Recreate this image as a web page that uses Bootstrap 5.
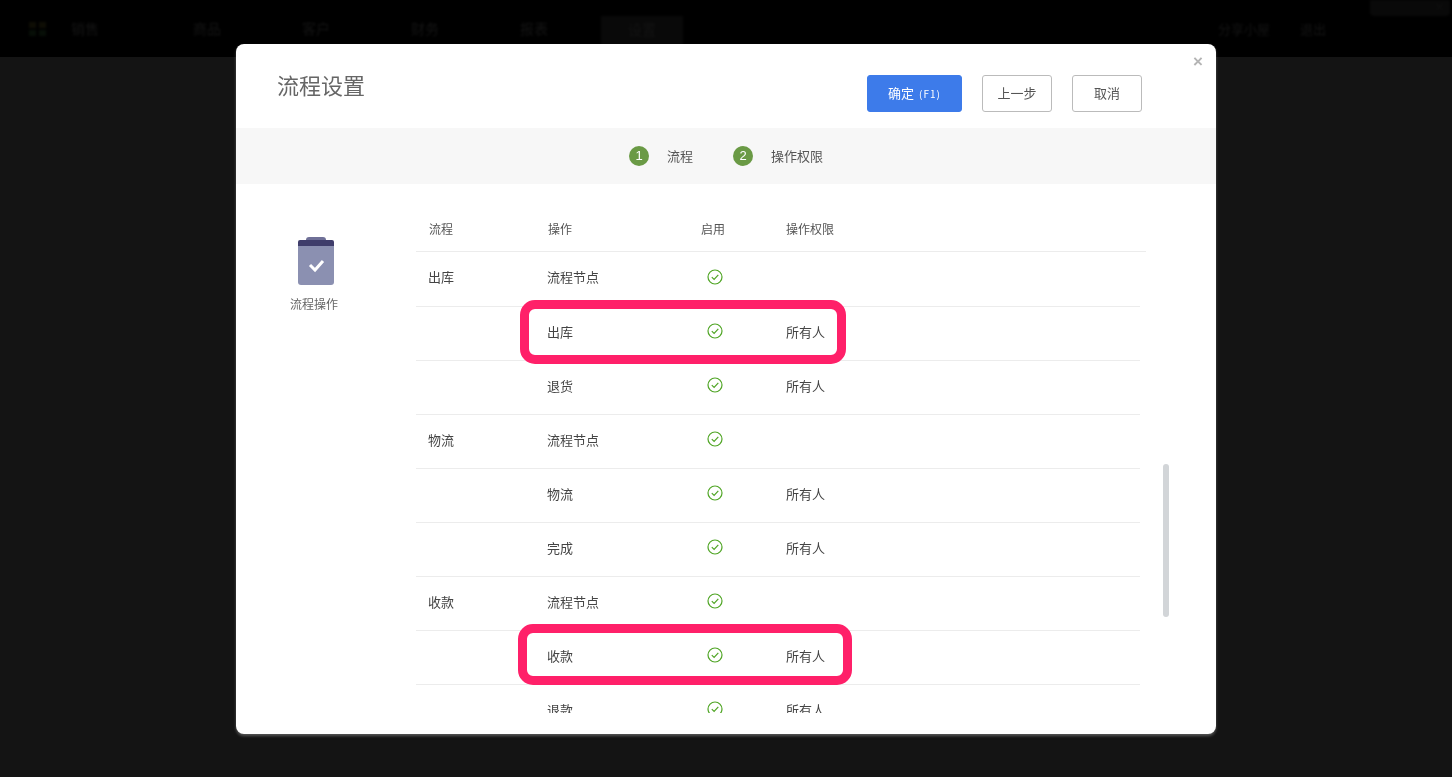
<!DOCTYPE html>
<html lang="zh-CN">
<head>
    <meta charset="UTF-8">
    <title>流程设置</title>
    <link href="https://cdn.jsdelivr.net/npm/bootstrap@5.3.2/dist/css/bootstrap.min.css" rel="stylesheet">
    <script src="https://cdn.jsdelivr.net/npm/bootstrap@5.3.2/dist/js/bootstrap.bundle.min.js"></script>
    <style>
        html, body { height: 100%; }
        body { background: #141414; font-family: "Noto Sans CJK SC", "Liberation Sans", sans-serif; font-size: 13px; color: #333; overflow: hidden; }
        .top-bar { height: 57px; background: #000; padding-left: 28px; color: #141414; font-size: 14px; position: relative; }
        .top-bar > * { filter: blur(1px); }
        .top-logo { width: 20px; height: 16px; margin-right: 23px; }
        .top-item { width: 109px; }
        .top-item.first-item { width: 122px; }
        .top-item.active-item { width: 82px; height: 41px; margin-left: -28px; background: #090909; line-height: 27px; text-align: center; align-self: flex-end; }
        .top-right { margin-right: 126px; gap: 30px; font-size: 13px; }
        .top-tab { position: absolute; right: 2px; top: 0; width: 80px; height: 16px; background: #090909; border-radius: 0 0 4px 4px; color: #141414; font-size: 9px; line-height: 14px; text-align: right; padding-right: 6px; }
        .sheet { position: fixed; left: 236px; top: 44px; width: 980px; height: 690px; background: #fff; border-radius: 8px; box-shadow: 0 2px 3px rgba(255,255,255,.28); overflow: hidden; }
        .close-x { position: absolute; right: 13px; top: 5px; color: #b4b4b4; font-size: 17px; font-weight: 700; font-family: "Liberation Sans", sans-serif; }
        .sheet-head { height: 84px; padding: 31px 74px 0 41px; }
        .sheet-title { font-size: 22px; line-height: 24px; color: #666; font-weight: 400; margin: -3px 0 0; }
        .act-btn { height: 37px; width: 70px; padding: 0 0 1px; font-size: 13px; color: #555; border: 1px solid #bbb; border-radius: 3px; background: #fff; }
        .act-btn.go-btn { width: 95px; background: #3d7bea; border-color: #3d7bea; color: #fff; margin-right: 20px; }
        .act-btn.prev-btn { margin-right: 20px; }
        .go-btn span { font-size: 10px; letter-spacing: 1px; margin-left: 2px; }
        .step-bar { height: 56px; background: #f7f7f7; padding-left: 393px; color: #555; }
        .step-num { width: 20px; height: 20px; border-radius: 50%; background: #6a9a45; color: #fff; font-size: 13px; font-family: "Liberation Sans", sans-serif; line-height: 20px; text-align: center; margin-right: 18px; }
        .step-gap { margin-right: 40px; }
        .side-col { width: 180px; padding: 53px 20px 0 0; }
        .side-label { font-size: 12px; color: #666; margin: 10px 4px 0 0; }
        .flow-area { height: 529px; overflow: hidden; position: relative; width: 730px; }
        .flow-table { table-layout: fixed; margin: 0; font-size: 13px; color: #444; }
        .flow-head { width: 730px; margin-top: 26px; }
        .flow-head th { font-size: 12px; font-weight: 400; color: #555; height: 41px; padding: 0 0 2px; vertical-align: middle; border-bottom: 1px solid #ececec; }
        .flow-body { width: 724px; }
        .flow-body td { height: 54px; padding: 0 0 4px; vertical-align: middle; border-bottom: 1px solid #ececec; }
        .flow-body tr:first-child td { height: 55px; }
        .w-flow { width: 119px; padding-left: 13px !important; }
        .flow-body .w-flow { padding-left: 12px !important; }
        .w-op { width: 141px; padding-left: 13px !important; }
        .flow-body .w-op { padding-left: 12px !important; }
        .w-on { width: 110px; padding-left: 25px !important; }
        .flow-body .w-on { padding-left: 31px !important; }
        .ok-icon { width: 16px; height: 16px; display: block; margin-top: -2px; }
        .flow-body tr:first-child .ok-icon { margin-top: 0; }
        .hilite { position: absolute; border: 9px solid #ff2069; border-radius: 15px; pointer-events: none; }
        .hilite-a { left: 104px; top: 116px; width: 326px; height: 64px; }
        .hilite-b { left: 102px; top: 440px; width: 334px; height: 61px; }
        .scroll-thumb { position: absolute; left: 927px; top: 420px; width: 6px; height: 153px; background: #d2d5d8; border-radius: 3px; }
    </style>
</head>
<body>
    <div class="top-bar d-flex align-items-center">
        <svg class="top-logo" viewBox="0 0 20 16"><rect x="1" y="1" width="7" height="6" fill="#0e0d04"/><rect x="11" y="1" width="7" height="6" fill="#0e0d04"/><rect x="1" y="9" width="7" height="6" fill="#070e07"/><rect x="11" y="9" width="7" height="6" fill="#070e07"/></svg>
        <div class="top-item first-item">销售</div>
        <div class="top-item">商品</div>
        <div class="top-item">客户</div>
        <div class="top-item">财务</div>
        <div class="top-item">报表</div>
        <div class="top-item active-item">设置</div>
        <div class="top-right d-flex ms-auto"><span>分享小屋</span><span>退出</span></div>
        <div class="top-tab">× </div>
    </div>

    <div class="sheet d-flex flex-column">
        <div class="close-x">×</div>
        <div class="sheet-head d-flex justify-content-between">
            <h5 class="sheet-title">流程设置</h5>
            <div class="d-flex">
                <button class="btn act-btn go-btn">确定 <span>(F1)</span></button>
                <button class="btn act-btn prev-btn">上一步</button>
                <button class="btn act-btn">取消</button>
            </div>
        </div>
        <div class="step-bar d-flex align-items-center">
            <span class="step-num">1</span><span class="step-gap">流程</span>
            <span class="step-num">2</span><span>操作权限</span>
        </div>
        <div class="d-flex flex-grow-1">
            <div class="side-col d-flex flex-column align-items-center">
                <svg width="36" height="48" viewBox="0 0 36 48">
                    <path d="M8 3a3 3 0 0 1 3-3h14a3 3 0 0 1 3 3v1H8z" fill="#6f7097"/>
                    <path d="M0 9h36v36a3 3 0 0 1-3 3H3a3 3 0 0 1-3-3z" fill="#8b90b1"/>
                    <path d="M2 3h32a2 2 0 0 1 2 2v4H0V5a2 2 0 0 1 2-2z" fill="#3f3d6b"/>
                    <path d="M12 28l5 5 8-9" fill="none" stroke="#fff" stroke-width="3"/>
                </svg>
                <div class="side-label">流程操作</div>
            </div>
            <div class="flow-area">
                <table class="table table-borderless flow-table flow-head">
                    <thead><tr><th class="w-flow">流程</th><th class="w-op">操作</th><th class="w-on">启用</th><th>操作权限</th></tr></thead>
                </table>
                <table class="table table-borderless flow-table flow-body">
                    <tbody id="rows"></tbody>
                </table>
                <div class="hilite hilite-a"></div>
                <div class="hilite hilite-b"></div>
            </div>
        </div>
        <div class="scroll-thumb"></div>
    </div>

    <script>
        // 流程行
        const rows = [
            ["出库", "流程节点", ""], ["", "出库", "所有人"], ["", "退货", "所有人"],
            ["物流", "流程节点", ""], ["", "物流", "所有人"], ["", "完成", "所有人"],
            ["收款", "流程节点", ""], ["", "收款", "所有人"], ["", "退款", "所有人"]
        ];
        const icon = '<svg class="ok-icon" viewBox="0 0 16 16" fill="none" stroke="#4fa524" stroke-width="1.2"><circle cx="8" cy="8" r="7"/><path d="M4.8 8.2l2.3 2.3 4.2-4.6"/></svg>';
        document.getElementById("rows").innerHTML = rows.map(r =>
            `<tr><td class="w-flow">${r[0]}</td><td class="w-op">${r[1]}</td><td class="w-on">${icon}</td><td>${r[2]}</td></tr>`
        ).join("");
    </script>
</body>
</html>
